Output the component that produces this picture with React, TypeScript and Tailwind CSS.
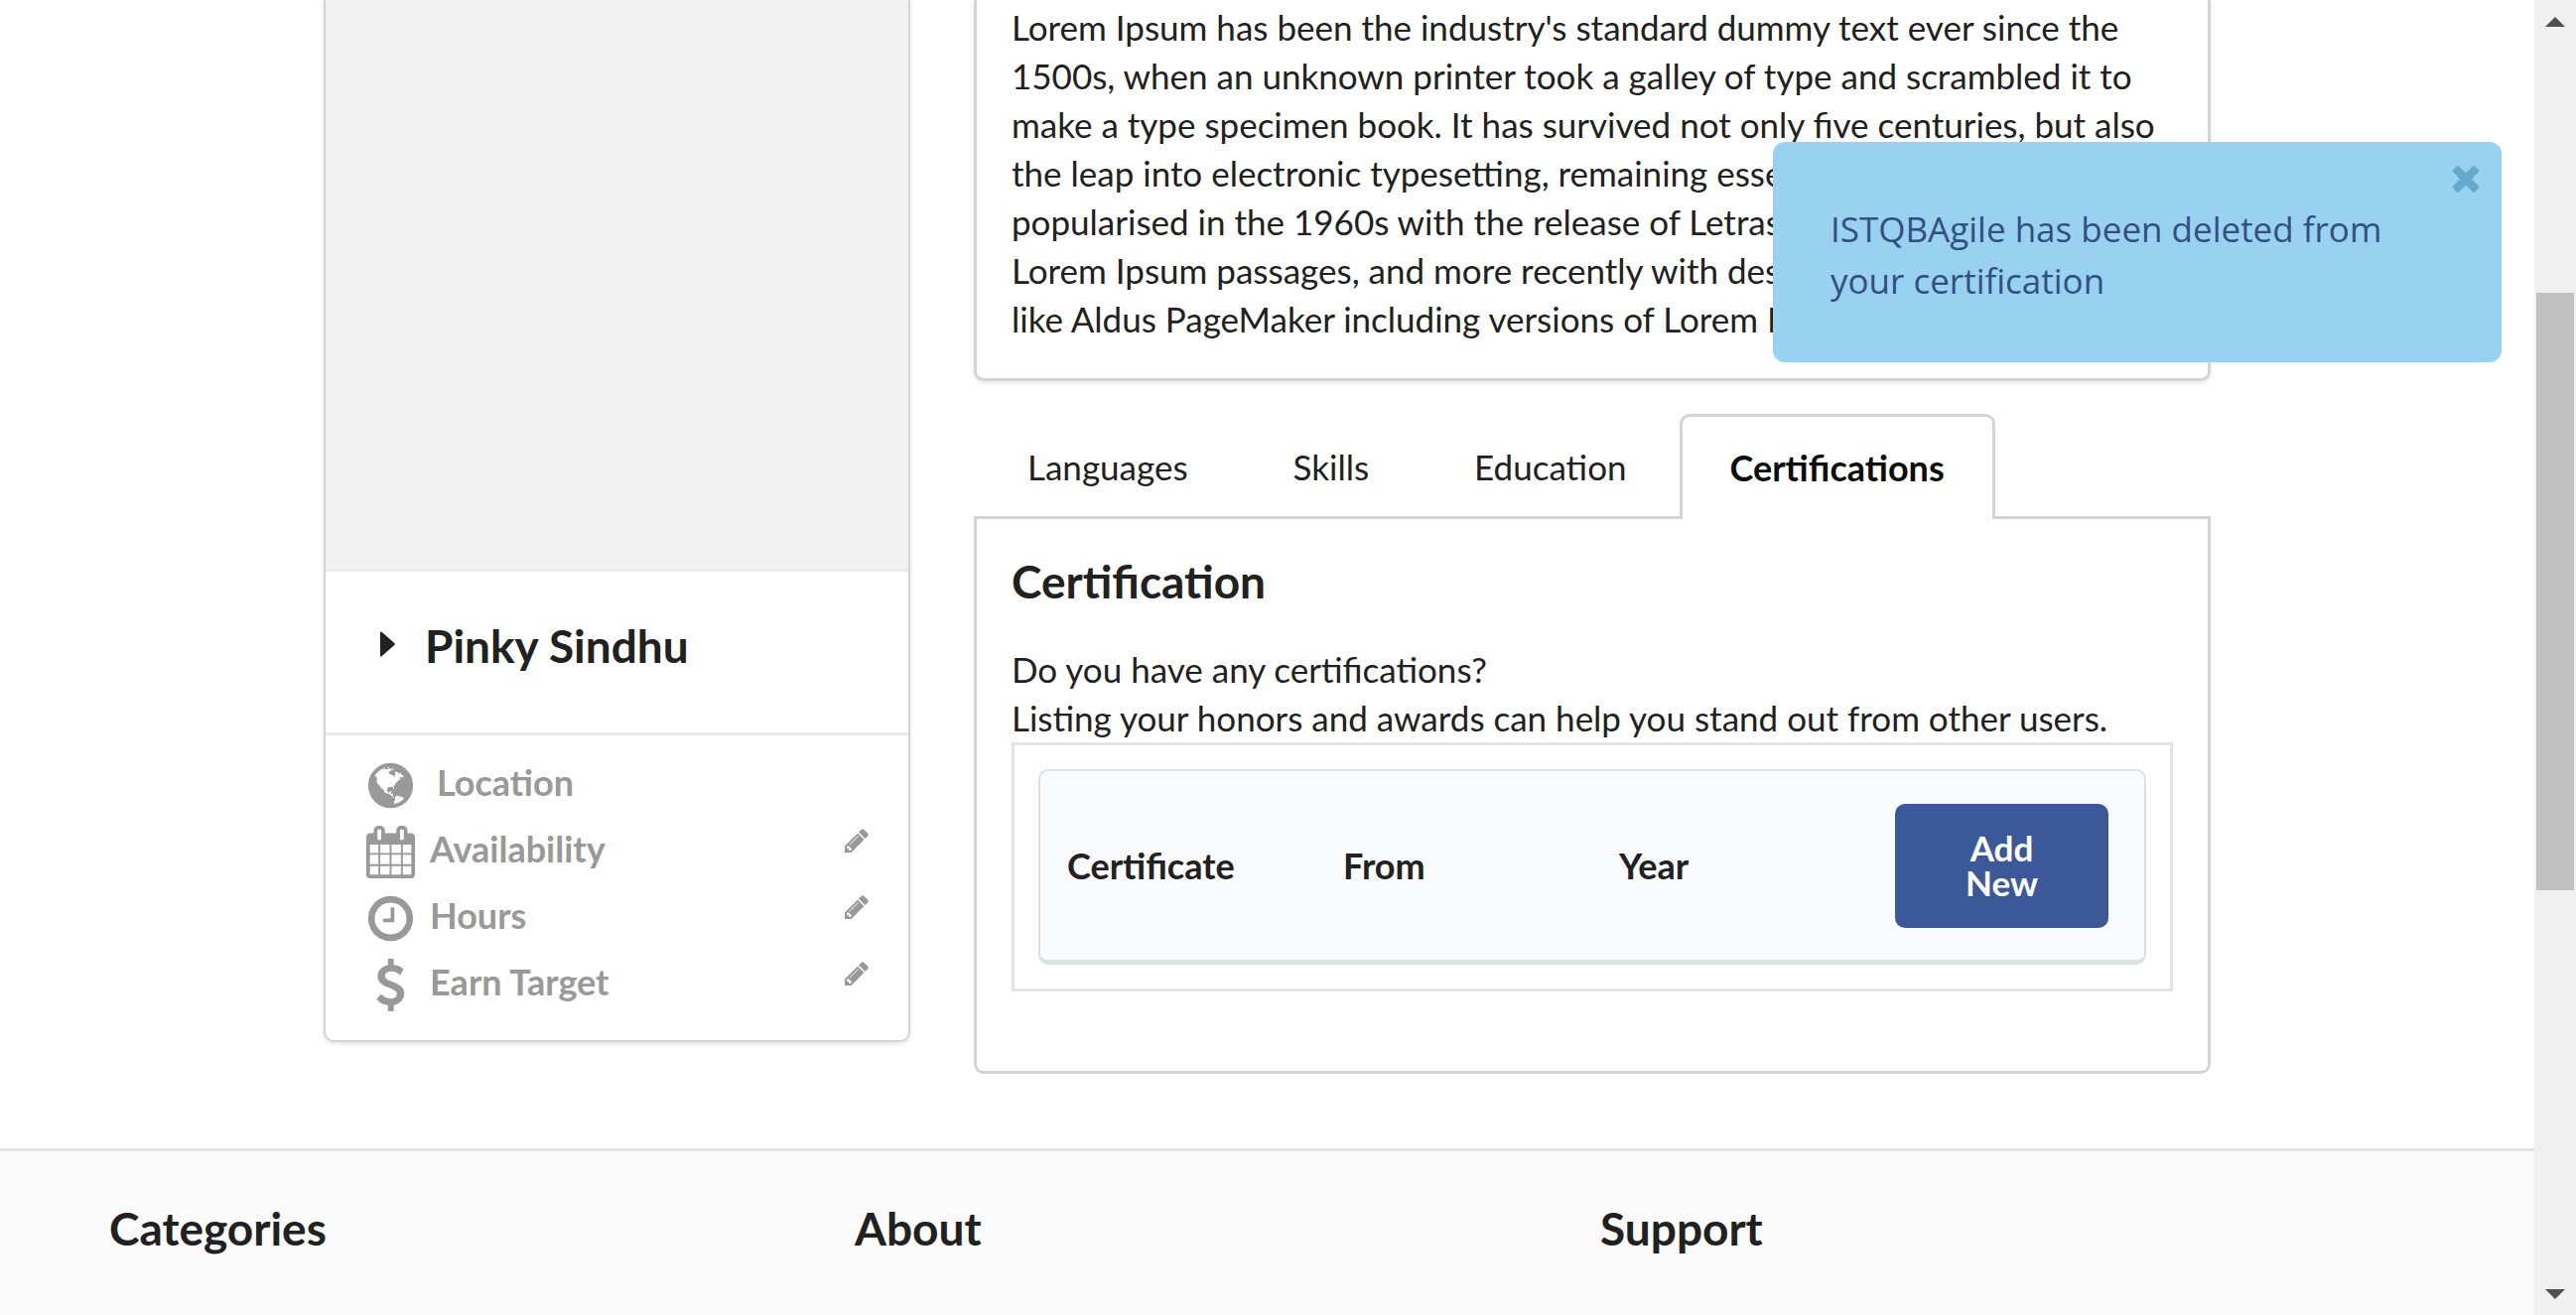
import React from "react";

const paths = {
  globe:
    "M896 128q209 0 385.5 103t279.5 279.5 103 385.5-103 385.5-279.5 279.5-385.5 103-385.5-103-279.5-279.5-103-385.5 103-385.5 279.5-279.5 385.5-103zm274 521q-2 1-9.5 9.5t-13.5 9.5q2 0 4.5-5t5-11 3.5-7q6-7 22-15 14-6 52-12 34-8 51 11-2-2 9.5-13t14.5-12q3-2 15-4.5t15-7.5l2-22q-12 1-17.5-7t-6.5-21q0 2-6 8 0-7-4.5-8t-11.5 1-9 1q-10-3-15-7.5t-8-16.5-4-15q-2-5-9.5-11t-9.5-10q-1-2-2.5-5.5t-3-6.5-4-5.5-5.5-2.5-7 5-7.5 10-4.5 5q-3-2-6-1.5t-4.5 1-4.5 3-5 3.5q-3 2-8.5 3t-8.5 2q15-5-1-11-10-4-16-3 9-4 7.5-12t-8.5-14h5q-1-4-8.5-8.5t-17.5-8.5-13-6q-8-5-34-9.5t-33-.5q-5 6-4.5 10.5t4 14 3.5 12.5q1 6-5.5 13t-6.5 12q0 7 14 15.5t10 21.5q-3 8-16 16t-16 12q-5 8-1.5 18.5t10.5 16.5q2 2 1.5 4t-3.5 4.5-5.5 4-6.5 3.5l-3 2q-11 5-20.5-6t-13.5-26q-7-25-16-30-23-8-29 1-5-13-41-26-25-9-58-4 6-1 0-15-7-15-19-12 3-6 4-17.5t1-13.5q3-13 12-23 1-1 7-8.5t9.5-13.5.5-6q35 4 50-11 5-5 11.5-17t10.5-17q9-6 14-5.5t14.5 5.5 14.5 5q14 1 15.5-11t-7.5-20q12 1 3-17-4-7-8-9-12-4-27 5-8 4 2 8-1-1-9.5 10.5t-16.5 17.5-16-5q-1-1-5.5-13.5t-9.5-13.5q-8 0-16 15 3-8-11-15t-24-8q19-12-8-27-7-4-20.5-5t-19.5 4q-5 7-5.5 11.5t5 8 10.5 5.5 11.5 4 8.5 3q14 10 8 14-2 1-8.5 3.5t-11.5 4.5-6 4q-3 4 0 14t-2 14q-5-5-9-17.5t-7-16.5q7 9-25 6l-10-1q-4 0-16 2t-20.5 1-13.5-8q-4-8 0-20 1-4 4-2-4-3-11-9.5t-10-8.5q-46 15-94 41 6 1 12-1 5-2 13-6.5t10-5.5q34-14 42-7l5-5q14 16 20 25-7-4-30-1-20 6-22 12 7 12 5 18-4-3-11.5-10t-14.5-11-15-5q-16 0-22 1-146 80-235 222 7 7 12 8 4 1 5 9t2.5 11 11.5-3q9 8 3 19 1-1 44 27 19 17 21 21 3 11-10 18-1-2-9-9t-9-4q-3 5 .5 18.5t10.5 12.5q-7 0-9.5 16t-2.5 35.5-1 23.5l2 1q-3 12 5.5 34.5t21.5 19.5q-13 3 20 43 6 8 8 9 3 2 12 7.5t15 10 10 10.5q4 5 10 22.5t14 23.5q-2 6 9.5 20t10.5 23q-1 0-2.5 1t-2.5 1q3 7 15.5 14t15.5 13q1 3 2 10t3 11 8 2q2-20-24-62-15-25-17-29-3-5-5.5-15.5t-4.5-14.5q2 0 6 1.5t8.5 3.5 7.5 4 2 3q-3 7 2 17.5t12 18.5 17 19 12 13q6 6 14 19.5t0 13.5q9 0 20 10.5t17 19.5q5 8 8 26t5 24q2 7 8.5 13.5t12.5 9.5l16 8 13 7q5 2 18.5 10.5t21.5 11.5q10 4 16 4t14.5-2.5 13.5-3.5q15-2 29 15t21 21q36 19 55 11-2 1 .5 7.5t8 15.5 9 14.5 5.5 8.5q5 6 18 15t18 15q6-4 7-9-3 8 7 20t18 10q14-3 14-32-31 15-49-18 0-1-2.5-5.5t-4-8.5-2.5-8.5 0-7.5 5-3q9 0 10-3.5t-2-12.5-4-13q-1-8-11-20t-12-15q-5 9-16 8t-16-9q0 1-1.5 5.5t-1.5 6.5q-13 0-15-1 1-3 2.5-17.5t3.5-22.5q1-4 5.5-12t7.5-14.5 4-12.5-4.5-9.5-17.5-2.5q-19 1-26 20-1 3-3 10.5t-5 11.5-9 7q-7 3-24 2t-24-5q-13-8-22.5-29t-9.5-37q0-10 2.5-26.5t3-25-5.5-24.5q3-2 9-9.5t10-10.5q2-1 4.5-1.5t4.5 0 4-1.5 3-6q-1-1-4-3-3-3-4-3 7 3 28.5-1.5t27.5 1.5q15 11 22-2 0-1-2.5-9.5t-.5-13.5q5 27 29 9 3 3 15.5 5t17.5 5q3 2 7 5.5t5.5 4.5 5-.5 8.5-6.5q10 14 12 24 11 40 19 44 7 3 11 2t4.5-9.5 0-14-1.5-12.5l-1-8v-18l-1-8q-15-3-18.5-12t1.5-18.5 15-18.5q1-1 8-3.5t15.5-6.5 12.5-8q21-19 15-35 7 0 11-9-1 0-5-3t-7.5-5-4.5-2q9-5 2-16 5-3 7.5-11t7.5-10q9 12 21 2 8-8 1-16 5-7 20.5-10.5t18.5-9.5q7 2 8-2t1-12 3-12q4-5 15-9t13-5l17-11q3-4 0-4 18 2 31-11 10-11-6-20 3-6-3-9.5t-15-5.5q3-1 11.5-.5t10.5-1.5q15-10-7-16-17-5-43 12zm-163 877q206-36 351-189-3-3-12.5-4.5t-12.5-3.5q-18-7-24-8 1-7-2.5-13t-8-9-12.5-8-11-7q-2-2-7-6t-7-5.5-7.5-4.5-8.5-2-10 1l-3 1q-3 1-5.5 2.5t-5.5 3-4 3 0 2.5q-21-17-36-22-5-1-11-5.5t-10.5-7-10-1.5-11.5 7q-5 5-6 15t-2 13q-7-5 0-17.5t2-18.5q-3-6-10.5-4.5t-12 4.5-11.5 8.5-9 6.5-8.5 5.5-8.5 7.5q-3 4-6 12t-5 11q-2-4-11.5-6.5t-9.5-5.5q2 10 4 35t5 38q7 31-12 48-27 25-29 40-4 22 12 26 0 7-8 20.5t-7 21.5q0 6 2 16z",
  calendar:
    "M192 1664h288v-288h-288v288zm352 0h320v-288h-320v288zm-352-352h288v-320h-288v320zm352 0h320v-320h-320v320zm-352-384h288v-288h-288v288zm736 736h320v-288h-320v288zm-384-736h320v-288h-320v288zm768 736h288v-288h-288v288zm-384-352h320v-320h-320v320zm-352-864v-288q0-13-9.5-22.5t-22.5-9.5h-64q-13 0-22.5 9.5t-9.5 22.5v288q0 13 9.5 22.5t22.5 9.5h64q13 0 22.5-9.5t9.5-22.5zm736 864h288v-320h-288v320zm-384-384h320v-288h-320v288zm384 0h288v-288h-288v288zm32-480v-288q0-13-9.5-22.5t-22.5-9.5h-64q-13 0-22.5 9.5t-9.5 22.5v288q0 13 9.5 22.5t22.5 9.5h64q13 0 22.5-9.5t9.5-22.5zm384-64v1280q0 52-38 90t-90 38h-1408q-52 0-90-38t-38-90v-1280q0-52 38-90t90-38h128v-96q0-66 47-113t113-47h64q66 0 113 47t47 113v96h384v-96q0-66 47-113t113-47h64q66 0 113 47t47 113v96h128q52 0 90 38t38 90z",
  clock:
    "M1024 544v448q0 14-9 23t-23 9h-320q-14 0-23-9t-9-23v-64q0-14 9-23t23-9h224v-352q0-14 9-23t23-9h64q14 0 23 9t9 23zm416 352q0-148-73-273t-198-198-273-73-273 73-198 198-73 273 73 273 198 198 273 73 273-73 198-198 73-273zm224 0q0 209-103 385.5t-279.5 279.5-385.5 103-385.5-103-279.5-279.5-103-385.5 103-385.5 279.5-279.5 385.5-103 385.5 103 279.5 279.5 103 385.5z",
  dollar:
    "M1362 1185q0 153-99.5 263.5t-258.5 136.5v175q0 14-9 23t-23 9h-135q-13 0-22.5-9.5t-9.5-22.5v-175q-66-9-127.5-31t-101.5-44.5-74-48-46.5-37.5-17.5-18q-17-21-2-41l103-135q7-10 23-12 15-2 24 9l2 2q113 99 243 125 37 8 74 8 81 0 142.5-43t61.5-122q0-28-15-53t-33.5-42-58.5-37.5-66-32-80-32.5q-39-16-61.5-25t-61.5-26.5-62.5-31-56.5-35.5-53.5-42.5-43.5-49-35.5-58-21-66.5-8.5-78q0-138 98-242t255-134v-180q0-13 9.5-22.5t22.5-9.5h135q14 0 23 9t9 23v176q57 6 110.5 23t87 33.5 63.5 37.5 39 29 15 14q17 18 5 38l-81 146q-8 15-23 16-14 3-27-7-3-3-14.5-12t-39-26.5-58.5-32-74.5-26-85.5-11.5q-95 0-155 43t-60 111q0 26 8.5 48t29.5 41.5 39.5 33 56 31 60.5 27 70 27.5q53 20 81 31.5t76 35 75.5 42.5 62 50 53 63.5 31.5 76.5 13 94z",
  pencil:
    "M491 1536l91-91-235-235-91 91v107h128v128h107zm523-928q0-22-22-22-10 0-17 7l-542 542q-7 7-7 17 0 22 22 22 10 0 17-7l542-542q7-7 7-17zm-54-192l416 416-832 832h-416v-416zm683 96q0 53-37 90l-166 166-416-416 166-165q36-38 90-38 53 0 91 38l235 234q37 39 37 91z",
  times:
    "M1490 1322q0 40-28 68l-136 136q-28 28-68 28t-68-28l-294-294-294 294q-28 28-68 28t-68-28l-136-136q-28-28-28-68t28-68l294-294-294-294q-28-28-28-68t28-68l136-136q28-28 68-28t68 28l294 294 294-294q28-28 68-28t68 28l136 136q28 28 28 68t-28 68l-294 294 294 294q28 28 28 68z",
};

function Icon({ name, className }: { name: keyof typeof paths; className: string }) {
  return (
    <svg viewBox="0 0 1792 1792" fill="currentColor" aria-hidden="true" overflow="visible" className={className}>
      <path d={paths[name]} />
    </svg>
  );
}

const details: { icon: keyof typeof paths; label: string; editable: boolean }[] = [
  { icon: "globe", label: "Location", editable: false },
  { icon: "calendar", label: "Availability", editable: true },
  { icon: "clock", label: "Hours", editable: true },
  { icon: "dollar", label: "Earn Target", editable: true },
];

function ProfileCard() {
  return (
    <aside className="self-start overflow-hidden rounded-b-[10px] border-2 border-t-0 border-[#d4d4d5] bg-white shadow-[0_2px_4px_#e4e4e5]">
      <div className="h-[573px] bg-[#f1f1f1]" />
      <div className="flex h-[168px] items-center border-y-3 border-[#ebebeb] pb-3 pl-[55px]">
        <button aria-label="Expand name" className="mr-[30px] pb-1">
          <svg viewBox="0 0 15 26" className="h-[26px] w-[15px]" aria-hidden="true">
            <path d="M0 1.5Q0 0 1.5 .8L14.3 12Q15.4 13 14.3 14L1.5 25.2Q0 26 0 24.500z" fill="#212121" />
          </svg>
        </button>
        <h2 className="text-[46px] leading-[58px] font-bold">Pinky Sindhu</h2>
      </div>
      <ul className="pt-[17px] pb-[22px] text-[36px] text-[#999]">
        {details.map((d) => (
          <li key={d.label} className="flex h-[67px] items-center pr-[38px] pl-[39px]">
            <Icon name={d.icon} className="size-[53px] shrink-0" />
            <span className={d.editable ? "ml-[13px] pb-1.5 font-bold" : "ml-[20px] pb-1.5 font-bold"}>{d.label}</span>
            {d.editable && (
              <button aria-label={`Edit ${d.label}`} className="ml-auto pb-6">
                <Icon name="pencil" className="size-[28px]" />
              </button>
            )}
          </li>
        ))}
      </ul>
    </aside>
  );
}

function Tabs() {
  return (
    <div role="tablist" className="flex items-stretch border-b-3 border-[#d4d4d5] pl-px">
      {["Languages", "Skills", "Education", "Certifications"].map((tab) => {
        const active = tab === "Certifications";
        return (
          <button
            key={tab}
            role="tab"
            aria-selected={active}
            className={
              active
                ? "-mb-[3px] h-[106px] rounded-t-[10px] border-3 border-b-0 border-[#d4d4d5] bg-white px-[48px] text-[36px] font-bold text-[#0d0d0d]"
                : "-mb-[3px] h-[106px] border-x-3 border-transparent bg-clip-padding px-[50px]"
            }
          >
            {tab}
          </button>
        );
      })}
    </div>
  );
}

function CertificationPanel() {
  return (
    <section className="rounded-b-[10px] border-3 border-t-0 border-[#d4d4d5] px-[35px] pt-[34px] pb-[80px]">
      <h3 className="text-[46px] leading-[58px] font-bold">Certification</h3>
      <p className="mt-[35px]">
        Do you have any certifications?
        <br />
        Listing your honors and awards can help you stand out from other users.
      </p>
      <div className="border-3 border-[#e4e4e4] p-[24px]">
        <table className="w-full table-fixed border-separate border-spacing-0 rounded-[10px] border-2 border-b-5 border-[#dedfdf] bg-[#f9fafb]">
          <thead>
            <tr className="text-left text-[36px]">
              <th className="h-[190px] pl-[27px]">Certificate</th>
              <th className="pl-[27px]">From</th>
              <th className="pl-[27px]">Year</th>
              <th className="pr-[36px] pl-[27px]">
                <button className="h-[125px] w-full rounded-[10px] bg-[#3b5998] px-[50px] text-center text-[35px] leading-[35px] font-bold text-white">
                  Add New
                </button>
              </th>
            </tr>
          </thead>
        </table>
      </div>
    </section>
  );
}

function Toast() {
  return (
    <div
      role="status"
      className="absolute top-[143px] right-[75px] w-[734px] rounded-[12px] bg-[#99d2f1] px-[58px] pt-[62px] pb-[56px] font-['Open_Sans',sans-serif] text-[35px] leading-[52px] text-[#31507f]"
    >
      ISTQBAgile has been deleted from your certification
      <button aria-label="Close" className="absolute top-[16px] right-[16px] text-[#67a9cc]">
        <Icon name="times" className="size-[40px]" />
      </button>
    </div>
  );
}

function ScrollBar() {
  return (
    <div className="flex w-[42px] shrink-0 flex-col items-stretch justify-between bg-[#f0f0f0]">
      <button aria-label="Scroll up" className="flex h-[43px] items-center justify-center">
        <svg viewBox="0 0 20 10" className="w-[20px]" aria-hidden="true">
          <path d="M10 0L20 10H0z" fill="#505050" />
        </svg>
      </button>
      <div className="flex flex-1 flex-col px-[2px]">
        <div className="basis-[252px]" />
        <div className="h-[602px] bg-[#c1c1c1]" />
      </div>
      <button aria-label="Scroll down" className="flex h-[43px] items-center justify-center">
        <svg viewBox="0 0 20 10" className="w-[20px]" aria-hidden="true">
          <path d="M0 0H20L10 10z" fill="#505050" />
        </svg>
      </button>
    </div>
  );
}

export default function App() {
  return (
    <div className="relative flex h-screen overflow-hidden bg-white font-[Lato,sans-serif] text-[35px] leading-[49px] text-[#212121]">
      <div className="flex min-w-0 flex-1 flex-col">
        <main className="mx-auto grid w-full max-w-[1901px] grid-cols-[591fr_1246fr] gap-x-[64px]">
          <ProfileCard />
          <div>
            <section className="rounded-b-[10px] border-3 border-t-0 border-[#d4d4d5] px-[35px] pt-[3px] pb-[35px] shadow-[0_2px_4px_#e4e4e5]">
              <p>
                Lorem Ipsum has been the industry's standard dummy text ever since the 1500s, when an unknown printer
                took a galley of type and scrambled it to make a type specimen book. It has survived not only five
                centuries, but also the leap into electronic typesetting, remaining essentially unchanged. It was
                popularised in the 1960s with the release of Letraset sheets containing Lorem Ipsum passages, and more
                recently with desktop publishing software like Aldus PageMaker including versions of Lorem Ipsum.
              </p>
            </section>
            <div className="pt-[33px]">
              <Tabs />
              <CertificationPanel />
            </div>
          </div>
        </main>
        <footer className="mt-[75px] grid flex-1 grid-cols-3 content-start border-t-3 border-[#e4e4e4] bg-[#fafafa] pt-[49px] pr-[190px] pl-[110px]">
          {["Categories", "About", "Support"].map((t) => (
            <h3 key={t} className="text-[46px] leading-[58px] font-bold">
              {t}
            </h3>
          ))}
        </footer>
      </div>
      <ScrollBar />
      <Toast />
    </div>
  );
}
